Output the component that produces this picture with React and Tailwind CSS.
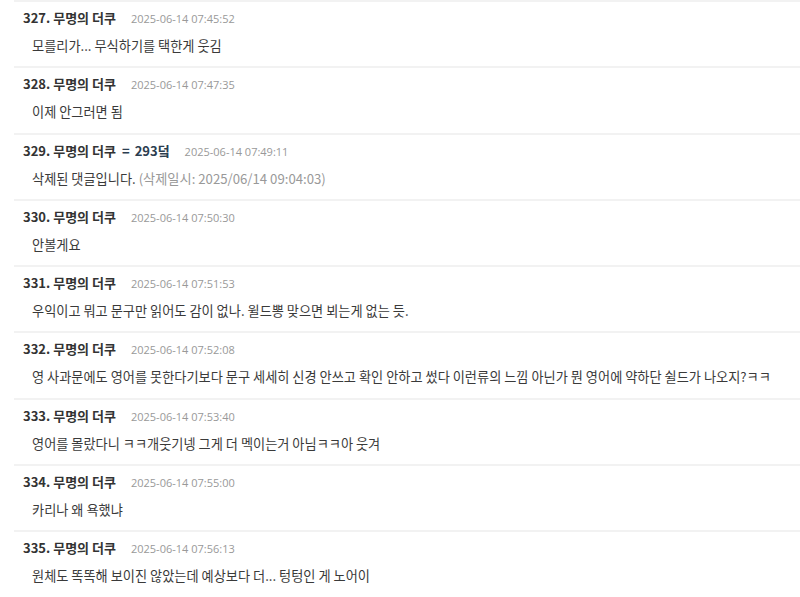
const comments = [
  { no: 327, time: '2025-06-14 07:45:52', body: '모를리가... 무식하기를 택한게 웃김' },
  { no: 328, time: '2025-06-14 07:47:35', body: '이제 안그러면 됨' },
  { no: 329, time: '2025-06-14 07:49:11', reply: '293덬', deleted: '2025/06/14 09:04:03' },
  { no: 330, time: '2025-06-14 07:50:30', body: '안볼게요' },
  { no: 331, time: '2025-06-14 07:51:53', body: '우익이고 뭐고 문구만 읽어도 감이 없나. 윌드뽕 맞으면 뵈는게 없는 듯.' },
  { no: 332, time: '2025-06-14 07:52:08', body: '영 사과문에도 영어를 못한다기보다 문구 세세히 신경 안쓰고 확인 안하고 썼다 이런류의 느낌 아닌가 뭔 영어에 약하단 쉴드가 나오지?ㅋㅋ' },
  { no: 333, time: '2025-06-14 07:53:40', body: '영어를 몰랐다니 ㅋㅋ개웃기넹 그게 더 멕이는거 아님ㅋㅋ아 웃겨' },
  { no: 334, time: '2025-06-14 07:55:00', body: '카리나 왜 욕했냐' },
  { no: 335, time: '2025-06-14 07:56:13', body: '원체도 똑똑해 보이진 않았는데 예상보다 더... 텅텅인 게 노어이' },
];

export default function App() {
  return (
    <div className="h-[597px] w-[800px] overflow-hidden bg-white font-['Noto_Sans_CJK_KR','Noto_Sans',sans-serif]">
      <ul className="ml-[14px]">
        {comments.map((c) => (
          <li key={c.no} className="h-[66.3px] border-t-2 border-[#f2f2f2] pt-[7px]">
            <div className="flex items-baseline pl-[9px] h-[18px] leading-[18px]">
              <span className="text-[13px] font-bold text-[#333]">
                {c.no}. 무명의 더쿠
                {c.reply && (
                  <span className="text-[#2c3e50]">
                    <span className="ml-[6px]">=</span>
                    <span className="ml-[5px]">{c.reply}</span>
                  </span>
                )}
              </span>
              <span className="ml-[15px] text-[11px] text-[#999] font-['Open_Sans',sans-serif]">{c.time}</span>
            </div>
            <p className="mt-[9px] pl-[18px] h-[20px] leading-[20px] text-[13.2px] text-[#3a3a3a] whitespace-nowrap">
              {c.deleted ? (
                <>
                  삭제된 댓글입니다. <span className="text-[#999]">(삭제일시: {c.deleted})</span>
                </>
              ) : (
                c.body
              )}
            </p>
          </li>
        ))}
      </ul>
    </div>
  );
}
